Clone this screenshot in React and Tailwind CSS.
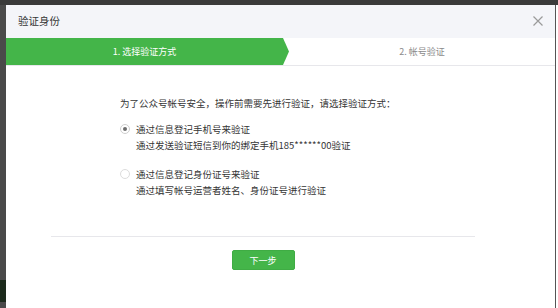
import React from "react";

export default function App() {
  const font = { fontFamily: '"Noto Sans CJK SC", "Noto Sans", sans-serif' };
  return (
    <div className="w-[558px] h-[308px] bg-[#3c3c3c] flex flex-col overflow-hidden" style={font}>
      <div className="h-[5px] shrink-0 bg-[#3a3a3a]" />
      <div className="flex flex-1 min-h-0">
        <div className="w-[6px] shrink-0 flex flex-col bg-[#4a4a4a]">
          <div className="h-[275px]" />
          <div className="h-[22px] bg-[#1c2a1c]" />
        </div>
        <div className="flex-1 bg-white flex flex-col">
          {/* header */}
          <div className="h-[33px] shrink-0 bg-[#f4f5f9] flex items-center justify-between pl-[12px] pr-[12px]">
            <span className="text-[10.5px] text-[#353535] leading-none">验证身份</span>
            <svg width="10" height="10" viewBox="0 0 10 10" className="mt-[-1px]">
              <path d="M0.5 0.5 L9.5 9.5 M9.5 0.5 L0.5 9.5" stroke="#9a9a9a" strokeWidth="1.2" fill="none" />
            </svg>
          </div>
          {/* steps */}
          <div className="h-[28px] shrink-0 flex border-b border-[#e7e7eb]">
            <div className="w-[283px] h-[27px] bg-[#44b549] flex items-center [clip-path:polygon(0_0,277px_0,100%_50%,277px_100%,0_100%)]">
              <div className="w-[277px] text-center text-[9px] text-white leading-none">1. 选择验证方式</div>
            </div>
            <div className="flex-1 h-[27px] flex items-center justify-center text-[9px] text-[#8a8a8a] leading-none">
              2. 帐号验证
            </div>
          </div>
          {/* body */}
          <div className="pl-[114px] pt-[29px] text-[9.5px] leading-[16px] text-[#353535]">
            <div>为了公众号帐号安全，操作前需要先进行验证，请选择验证方式：</div>
            <div className="mt-[10px] flex">
              <div className="w-[16px] shrink-0 pt-[3px]">
                <div className="w-[10px] h-[10px] rounded-full border border-[#cfcfcf] flex items-center justify-center">
                  <div className="w-[4px] h-[4px] rounded-full bg-[#6e6e6e]" />
                </div>
              </div>
              <div>
                <div>通过信息登记手机号来验证</div>
                <div>通过发送验证短信到你的绑定手机185******00验证</div>
              </div>
            </div>
            <div className="mt-[13px] flex">
              <div className="w-[16px] shrink-0 pt-[3px]">
                <div className="w-[10px] h-[10px] rounded-full border border-[#dcdcdc]" />
              </div>
              <div>
                <div>通过信息登记身份证号来验证</div>
                <div>通过填写帐号运营者姓名、身份证号进行验证</div>
              </div>
            </div>
          </div>
          <div className="ml-[45px] w-[424px] mt-[38px] border-t border-[#e7e7eb] flex justify-center pt-[13px]">
            <div className="w-[63px] h-[20px] rounded-[2px] bg-[#44b549] border border-[#3fac44] flex items-center justify-center text-[9px] text-white leading-none">
              下一步
            </div>
          </div>
        </div>
        <div className="w-[1px] shrink-0 bg-[#555555]" />
        <div className="w-[2px] shrink-0 bg-white" />
      </div>
    </div>
  );
}
